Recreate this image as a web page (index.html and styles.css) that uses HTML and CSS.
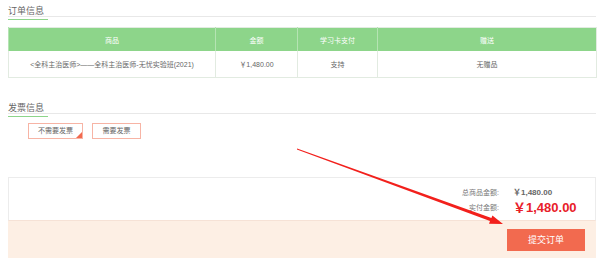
FILE: index.html
```html
<!DOCTYPE html>
<html lang="zh-CN">
<head>
    <meta charset="UTF-8">
    <title>确认订单</title>
    <link rel="stylesheet" href="styles.css">
</head>
<body>
    <div class="page">
        <div class="secTitle"><span>订单信息</span></div>
        <table class="orderTable">
            <tr>
                <th class="colName">商品</th>
                <th class="colPrice">金额</th>
                <th class="colCard">学习卡支付</th>
                <th>赠送</th>
            </tr>
            <tr>
                <td>&lt;全科主治医师&gt;——全科主治医师-无忧实验班(2021)</td>
                <td>￥1,480.00</td>
                <td>支持</td>
                <td>无赠品</td>
            </tr>
        </table>

        <div class="secTitle invoiceTitle"><span>发票信息</span></div>
        <div class="invoiceBtns">
            <a href="javascript:;" class="active">不需要发票</a>
            <a href="javascript:;">需要发票</a>
        </div>

        <div class="sumBox">
            <div class="sumRow">
                <span class="label">总商品金额:</span>
                <span class="total">￥1,480.00</span>
            </div>
            <div class="sumRow">
                <span class="label">实付金额:</span>
                <span class="pay">￥1,480.00</span>
            </div>
        </div>
        <div class="submitBar">
            <a href="javascript:;" class="submit">提交订单</a>
        </div>

        <!-- 标注箭头 -->
        <svg class="arrow" width="605" height="268" viewBox="0 0 605 268">
            <polygon points="297.1,148.6 491.4,217.9 492.4,215.4 503,224 489.0,223.7 490.0,221.1 296.9,149.4" fill="#f2201c"/>
        </svg>
    </div>
</body>
</html>
```

FILE: styles.css
```css
* {
    margin: 0;
    padding: 0;
    font-family: "Liberation Sans", "Noto Sans CJK SC", sans-serif;
}

body {
    background: #fff;
}

a {
    text-decoration: none;
}

.page {
    position: relative;
    width: 588px;
    height: 268px;
    padding-left: 8px;
}

.secTitle {
    height: 16px;
    border-bottom: 1px solid #e8e8e8;
}

.secTitle span {
    display: inline-block;
    width: 40px;
    height: 16px;
    line-height: 16px;
    font-size: 9px;
    color: #666;
    border-bottom: 1px solid #8dd58a;
}

.orderTable {
    width: 589px;
    margin-top: 10px;
    border-collapse: collapse;
    border: 1px solid #e2ebe1;
    text-align: center;
}

.orderTable th {
    height: 23px;
    background: #8dd58a;
    color: #fff;
    font-size: 7px;
    font-weight: normal;
    border-left: 1px solid #b5e4b3;
}

.orderTable td {
    height: 26px;
    font-size: 7px;
    color: #666;
    border-left: 1px solid #e2ebe1;
}

.colName {
    width: 206px;
}

.colPrice {
    width: 81px;
}

.colCard {
    width: 79px;
}

.invoiceTitle {
    margin-top: 19px;
}

.invoiceBtns {
    display: flex;
    gap: 9px;
    margin-top: 9px;
    padding-left: 20px;
}

.invoiceBtns a {
    position: relative;
    display: block;
    width: 47px;
    height: 14px;
    line-height: 14px;
    border: 1px solid #f7b4a5;
    text-align: center;
    font-size: 7px;
    color: #666;
}

.invoiceBtns a.active {
    width: 53px;
}

.invoiceBtns a.active::after {
    content: "";
    position: absolute;
    right: 0;
    bottom: 0;
    border-style: solid;
    border-width: 0 0 6px 6px;
    border-color: transparent transparent #f26a4f transparent;
}

.sumBox {
    height: 44px;
    margin-top: 38px;
    border: 1px solid #ececec;
    border-bottom-color: #f6e2d6;
    padding-top: 7px;
    box-sizing: border-box;
}

.sumRow {
    display: grid;
    grid-template-columns: 1fr 67px;
    column-gap: 14px;
    align-items: center;
    padding-right: 15px;
}

.sumRow .label {
    text-align: right;
    font-size: 7px;
    color: #777;
    line-height: 15px;
}

.sumRow .total {
    font-size: 8px;
    font-weight: bold;
    color: #666;
    line-height: 15px;
}

.sumRow .pay {
    font-size: 13px;
    font-weight: bold;
    color: #e8202a;
    line-height: 15px;
}

.submitBar {
    display: flex;
    justify-content: flex-end;
    height: 37px;
    padding: 8px 11px 0 0;
    box-sizing: border-box;
    background: #fdefe4;
}

.submit {
    display: block;
    width: 78px;
    height: 22px;
    line-height: 22px;
    background: #f26a4f;
    color: #fff;
    font-size: 9px;
    text-align: center;
}

.arrow {
    position: absolute;
    left: 0;
    top: 0;
    pointer-events: none;
}
```
